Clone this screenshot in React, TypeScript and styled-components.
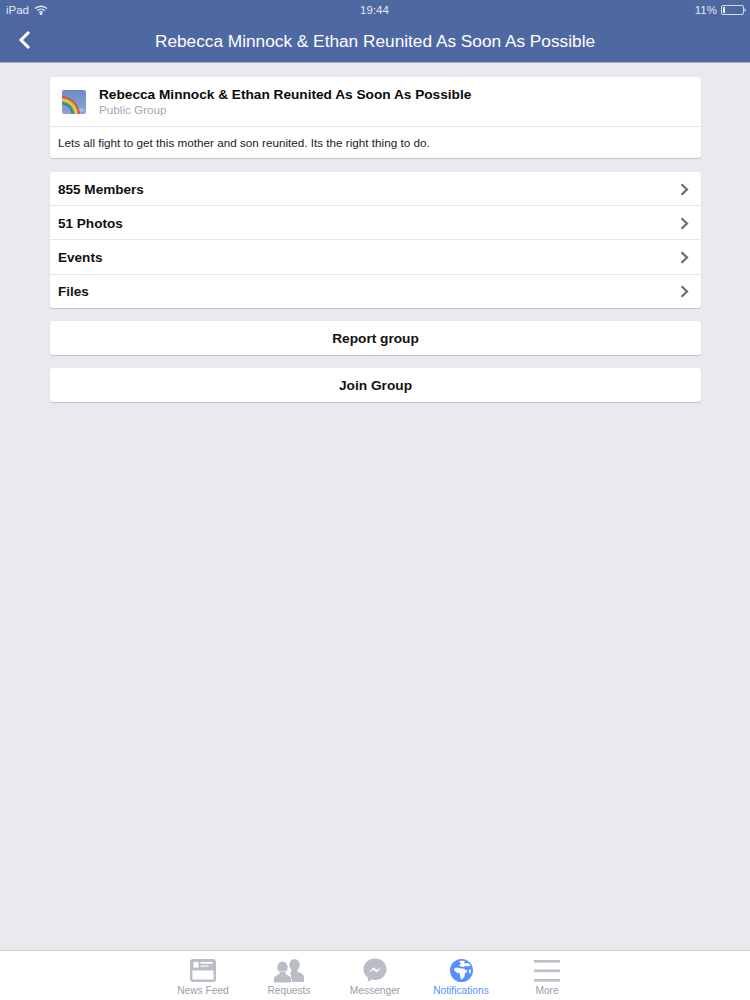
import React from "react";
import styled, { createGlobalStyle } from "styled-components";

const Global = createGlobalStyle`
  html, body { margin: 0; padding: 0; background: #e9eaed; }
  body { font-family: "Liberation Sans", Arial, sans-serif; -webkit-font-smoothing: antialiased; }
`;

const Page = styled.div`
  width: 750px;
  height: 1000px;
  display: flex;
  flex-direction: column;
  background: #e9eaed;
  overflow: hidden;
`;

const Header = styled.header`
  height: 62px;
  flex: none;
  background: #4e69a2;
  border-bottom: 1px solid #a3a9b7;
  display: flex;
  flex-direction: column;
  color: #fff;
`;

const StatusBar = styled.div`
  height: 20px;
  padding: 0 4px 0 6px;
  display: flex;
  align-items: center;
  font-size: 11.5px;
  color: #e3e7f0;
`;

const StatusSide = styled.div<{ $gap: number; $end?: boolean }>`
  flex: 1;
  display: flex;
  align-items: center;
  gap: ${(p) => p.$gap}px;
  justify-content: ${(p) => (p.$end ? "flex-end" : "flex-start")};
`;

const Clock = styled.div`
  margin-right: 3px;
`;

const NavBar = styled.div`
  height: 41px;
  padding-top: 1px;
  display: flex;
  align-items: center;
  position: relative;
  justify-content: center;
`;

const BackButton = styled.div`
  position: absolute;
  left: 18px;
  top: 10px;
  display: flex;
`;

const NavTitle = styled.div`
  font-size: 17.25px;
  color: #fff;
`;

const Content = styled.main`
  flex: 1;
  padding: 14px 49px 0 50px;
  display: flex;
  flex-direction: column;
`;

const Card = styled.section<{ $mb: number }>`
  background: #fff;
  border-radius: 3px;
  box-shadow: 0 1px 1px #bfc1c6, 0 0 1px #d4d6da;
  margin-bottom: ${(p) => p.$mb}px;
`;

const GroupHead = styled.div`
  height: 49px;
  display: flex;
  align-items: center;
  padding-left: 12px;
  gap: 13px;
  border-bottom: 1px solid #e3e4e7;
`;

const GroupText = styled.div`
  display: flex;
  flex-direction: column;
  padding-top: 1px;
`;

const GroupName = styled.div`
  font-size: 13.67px;
  font-weight: 700;
  line-height: 16px;
  color: #0b0b0c;
`;

const GroupType = styled.div`
  font-size: 11.7px;
  line-height: 14px;
  color: #a4a8b2;
`;

const Description = styled.div`
  height: 31px;
  padding-left: 8px;
  display: flex;
  align-items: center;
  font-size: 11.7px;
  color: #222;
`;

const Row = styled.div`
  height: 32.2px;
  padding: 1px 12px 0 8px;
  display: flex;
  align-items: center;
  justify-content: space-between;
  font-size: 13.55px;
  font-weight: 700;
  color: #111;
  & + & { border-top: 1px solid #e6e7e9; }
`;

const ActionButton = styled.div`
  height: 33px;
  padding-top: 1px;
  display: flex;
  align-items: center;
  justify-content: center;
  font-size: 13.7px;
  font-weight: 700;
  color: #111;
`;

const TabBar = styled.nav`
  height: 49px;
  flex: none;
  background: #fff;
  border-top: 1px solid #cfd0d3;
  display: flex;
  justify-content: center;
`;

const Tab = styled.div<{ $active?: boolean }>`
  width: 86px;
  display: flex;
  flex-direction: column;
  align-items: center;
  font-size: 10.2px;
  color: ${(p) => (p.$active ? "#5890ff" : "#9a9ea8")};
`;

const TabIcon = styled.div`
  height: 27px;
  margin-top: 6px;
  margin-bottom: 1px;
  display: flex;
  align-items: center;
  justify-content: center;
`;

const Wifi = () => (
  <svg width="14" height="10" viewBox="0 0 14 10" fill="none" stroke="#e3e7f0" strokeWidth="1.4">
    <path d="M1 3.500C4.400.4 9.600.4 13 3.500" />
    <path d="M3.200 5.600c2.200-2 5.400-2 7.600 0" />
    <path d="M5.200 7.500c1-.9 2.600-.9 3.600 0" />
    <circle cx="7" cy="9" r="0.6" fill="#e3e7f0" />
  </svg>
);

const Battery = () => (
  <svg width="25" height="10" viewBox="0 0 25 10">
    <rect x="0.5" y="0.5" width="22" height="9" rx="1.5" fill="none" stroke="#d4dae8" />
    <rect x="2" y="2" width="2" height="6" fill="#f0f2f7" />
    <rect x="23.5" y="3.500" width="1.2" height="3" fill="#d4dae8" />
  </svg>
);

const BackIcon = () => (
  <svg width="13" height="20" viewBox="0 0 13 20" fill="none">
    <path d="M11 2 3 10l8 8" stroke="#fff" strokeWidth="3" />
  </svg>
);

const Rainbow = () => (
  <svg width="24" height="24" viewBox="0 0 24 24">
    <defs>
      <clipPath id="tile"><rect width="24" height="24" rx="2" /></clipPath>
      <linearGradient id="sky" x1="0" y1="0" x2="0" y2="1">
        <stop offset="0" stopColor="#6e8cc6" />
        <stop offset="1" stopColor="#8ca4d4" />
      </linearGradient>
    </defs>
    <g clipPath="url(#tile)" fill="none">
      <rect width="24" height="24" fill="url(#sky)" />
      <ellipse cx="16" cy="20" rx="7" ry="2" fill="#a9bbde" />
      <circle cx="-1" cy="25" r="18" stroke="#e0403a" strokeWidth="1.6" />
      <circle cx="-1" cy="25" r="16.400" stroke="#f39a2c" strokeWidth="1.6" />
      <circle cx="-1" cy="25" r="14.800" stroke="#f4e23d" strokeWidth="1.6" />
      <circle cx="-1" cy="25" r="13.200" stroke="#54b848" strokeWidth="1.6" />
      <circle cx="-1" cy="25" r="11.600" stroke="#3a6fc4" strokeWidth="1.6" />
    </g>
  </svg>
);

const Chevron = () => (
  <svg width="9" height="13" viewBox="0 0 9 13" fill="none">
    <path d="M1.500 1.200 7 6.500l-5.500 5.300" stroke="#666c7c" strokeWidth="2.2" />
  </svg>
);

const NewsIcon = () => (
  <svg width="26" height="23" viewBox="0 0 26 23">
    <path fillRule="evenodd" fill="#b9bdc6" d="M3 0h20a3 3 0 0 1 3 3v17a3 3 0 0 1-3 3H3a3 3 0 0 1-3-3V3a3 3 0 0 1 3-3Zm-.5 11.500v9h21v-9ZM3.500 3v5.500h5V3Zm7 0v1.800h12V3Zm0 3.500v1.300h8V6.500Z" />
  </svg>
);

const RequestsIcon = () => (
  <svg width="30" height="24" viewBox="0 0 30 24" fill="#b9bdc6">
    <ellipse cx="20.500" cy="6" rx="5.200" ry="6" />
    <path d="M17.500 9.500h6v3.200c2.500 1 6.500 2 6.500 5.300V23H17v-7l-1-2.500 1.500-1Z" />
    <g stroke="#fff" strokeWidth="1.2" paintOrder="stroke">
      <ellipse cx="8.500" cy="8.500" rx="5.200" ry="6" />
      <path d="M5.500 12.500h6v2.800c2.600.9 5.500 2 5.500 4.700v3.600H0V20c0-2.700 3-3.800 5.500-4.700Z" />
    </g>
  </svg>
);

const MessengerIcon = () => (
  <svg width="24" height="25" viewBox="0 0 24 25">
    <path d="M12 .5C5.600.5.500 5.200.5 11.200c0 3.400 1.700 6.400 4.300 8.400v4.200l3.900-2.200c1 .3 2.100.4 3.300.4 6.400 0 11.500-4.700 11.500-10.800S18.400.5 12 .5Z" fill="#b9bdc6" />
    <path d="m5.500 14.500 5-5.300 3 2.800 5-2.800-5 5.300-3-2.800Z" fill="#fff" />
  </svg>
);

const GlobeIcon = () => (
  <svg width="23" height="23" viewBox="0 0 23 23">
    <circle cx="11.500" cy="11.500" r="11.500" fill="#5890ff" />
    <path fill="#fff" d="M9 2.500 12 1.500l3 .8-1 1.500 1.500.7 3-.5 2 2.500-2 .7-3.500-.3-1.500 1-1.500-.5-2 .3-.5-2 1.500-1ZM4 9.500l3-1 3 .7 2 .3 2.500.3 1 1.500 2-.3-.8 2-1.700 1.500-.5 3-2 2.500-1.500.2-1-3.500-.2-2.500-2.800-.5-2.500-2Zm15 1.500 1.500-1 .5 2.500-1 2.500-1-1.500Z" />
  </svg>
);

const MoreIcon = () => (
  <svg width="26" height="22" viewBox="0 0 26 22" fill="#b9bdc6">
    <rect y="0" width="26" height="2.600" />
    <rect y="9.500" width="26" height="2.600" />
    <rect y="19" width="26" height="2.600" />
  </svg>
);

const rows = ["855 Members", "51 Photos", "Events", "Files"];
const tabs = [
  { label: "News Feed", icon: <NewsIcon /> },
  { label: "Requests", icon: <RequestsIcon /> },
  { label: "Messenger", icon: <MessengerIcon /> },
  { label: "Notifications", icon: <GlobeIcon />, active: true },
  { label: "More", icon: <MoreIcon /> },
];

export default function App() {
  const title = "Rebecca Minnock & Ethan Reunited As Soon As Possible";
  return (
    <Page>
      <Global />
      <Header>
        <StatusBar>
          <StatusSide $gap={5}>iPad <Wifi /></StatusSide>
          <Clock>19:44</Clock>
          <StatusSide $gap={4} $end>11% <Battery /></StatusSide>
        </StatusBar>
        <NavBar>
          <BackButton><BackIcon /></BackButton>
          <NavTitle>{title}</NavTitle>
        </NavBar>
      </Header>
      <Content>
        <Card $mb={14}>
          <GroupHead>
            <Rainbow />
            <GroupText>
              <GroupName>{title}</GroupName>
              <GroupType>Public Group</GroupType>
            </GroupText>
          </GroupHead>
          <Description>Lets all fight to get this mother and son reunited. Its the right thing to do.</Description>
        </Card>
        <Card $mb={13}>
          {rows.map((r) => (
            <Row key={r}>{r}<Chevron /></Row>
          ))}
        </Card>
        <Card $mb={13}><ActionButton>Report group</ActionButton></Card>
        <Card $mb={0}><ActionButton>Join Group</ActionButton></Card>
      </Content>
      <TabBar>
        {tabs.map((t) => (
          <Tab key={t.label} $active={t.active}>
            <TabIcon>{t.icon}</TabIcon>
            {t.label}
          </Tab>
        ))}
      </TabBar>
    </Page>
  );
}
